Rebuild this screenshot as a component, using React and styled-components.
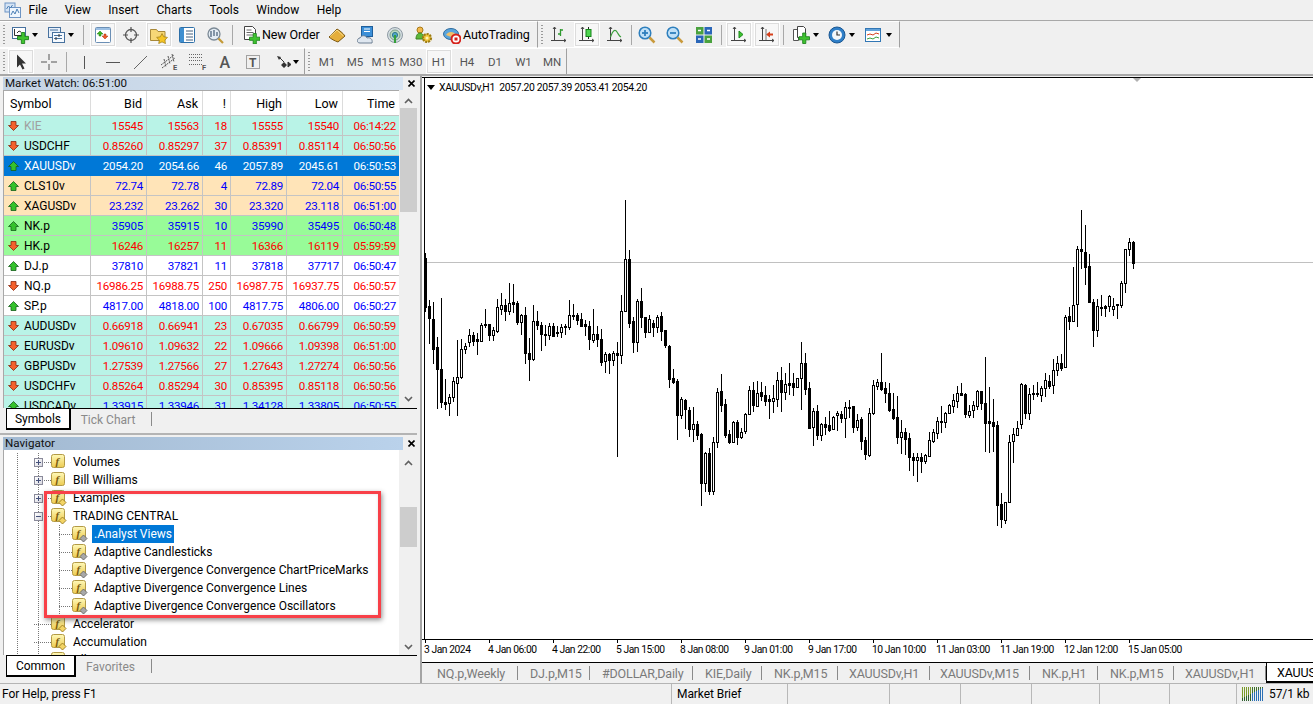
import React from "react";
import styled, { createGlobalStyle } from "styled-components";

const Global = createGlobalStyle`
  html, body { margin: 0; padding: 0; background: #f0f0f0; overflow: hidden; }
  * { box-sizing: border-box; }
  body { font-family: Roboto, "Liberation Sans", sans-serif; font-size: 12px; color: #000; }
`;

const Page = styled.div`
  width: 1313px; height: 704px; display: flex; flex-direction: column; overflow: hidden; background: #f0f0f0;
`;
const MenuBar = styled.div`
  height: 21px; flex: none; display: flex; align-items: center; gap: 17.5px; padding-left: 4px;
  border-bottom: 1px solid #a8a8a8; font-size: 12px;
`;
const Logo = styled.span`display: flex; width: 18px; margin-right: -11px; align-items: center;`;
const ToolRow = styled.div`
  height: ${p => p.$h}px; flex: none; display: flex; align-items: stretch;
  border-bottom: ${p => (p.$rule ? "2px solid #a8a8a8" : "0")};
`;
const ToolGroup = styled.div`
  display: flex; align-items: center; height: 100%; border-right: 1px solid #a0a0a0;
  border-top: 1px solid #fff; border-bottom: ${p => (p.$flat ? "0" : "1px solid #fff")};
`;
const Grip = styled.span`
  flex: none; align-self: center; width: ${p => p.$w}px; height: 19px;
  background: repeating-linear-gradient(#9a9a9a 0 1px, transparent 1px 3px) 3px 0 / 2px 100% no-repeat;
`;
const Sep = styled.span`
  flex: none; width: ${p => p.$w}px; height: 20px;
  background: linear-gradient(#a8a8a8, #a8a8a8) center / 1px 100% no-repeat;
`;
const Btn = styled.span`
  flex: none; display: flex; align-items: center; justify-content: ${p => (p.$start ? "flex-start" : "center")};
  height: 25px; width: ${p => (p.$on ? p.$w - 2 : p.$w)}px;
  padding-left: ${p => p.$pad || 0}px;
  margin: ${p => (p.$on ? "0 1px" : "0")};
  border: ${p => (p.$on ? "1px solid #fff" : "none")};
  background: ${p => (p.$on ? "#f7f7f7" : "transparent")};
  box-shadow: ${p => (p.$on ? "0 0 0 1px #dcdcdc inset" : "none")};
  font-size: ${p => (p.$tf ? "11.5px" : "12.5px")};
  color: ${p => (p.$tf ? "#555" : "#000")};
  white-space: nowrap;
`;
const Caret = styled.span`
  flex: none; width: 0; height: 0; margin-left: ${p => p.$m ?? 3}px;
  border: 3.5px solid transparent; border-top: 4px solid #000; border-bottom: 0;
`;
const BtnLabel = styled.span`margin-left: 2px; letter-spacing: -0.12px;`;

const Main = styled.div`flex: 1; min-height: 0; display: flex;`;
const LeftCol = styled.div`width: 417px; flex: none; display: flex; flex-direction: column;`;
const Panel = styled.div`
  height: ${p => p.$h}px; flex: none; display: flex; flex-direction: column; padding-top: 1px; position: relative;
`;
const Divider = styled.div`height: 3px; flex: none; border-top: 2px solid #b4b4b4;`;
const TitleRow = styled.div`height: 13px; flex: none; display: flex; align-items: center; padding-left: 3px;`;
const Title = styled.div`
  width: 400px; height: 13px; line-height: 13px; padding-left: 2px; font-size: 11.6px; color: #111;
  background: linear-gradient(90deg, ${p => p.$from}, ${p => p.$to});
`;
const Close = styled.span`flex: none; width: 14px; display: flex; justify-content: center; padding-left: 2px;`;

const Body = styled.div`
  height: ${p => p.$h}px; flex: none; display: flex; padding-left: 3px; overflow: hidden;
`;
const Grid = styled.div`
  width: 396px; flex: none; border-left: 1px solid #a8a8a8; border-top: 1px solid #a8a8a8; background: #fff; overflow: hidden;
`;
const Cols = "87px 56px 56px 28px 56px 56px 56px";
const Head = styled.div`
  display: grid; grid-template-columns: ${Cols}; height: 25px; border-bottom: 1px solid #c4c4c4; background: #fff;
`;
const HeadCell = styled.div`
  display: flex; align-items: center; justify-content: ${p => (p.$left ? "flex-start" : "flex-end")};
  padding: ${p => (p.$left ? "1px 0 0 6px" : "1px 4px 0 0")}; font-size: 12.5px; border-right: 1px solid #dcdcdc;
  &:last-child { border-right: 0; }
`;
const Row = styled.div`
  display: grid; grid-template-columns: ${Cols}; height: 20px; background: ${p => p.$bg};
  color: ${p => p.$fg}; border-bottom: 1px solid ${p => (p.$sel ? p.$bg : "#c4c4c4")};
`;
const Cell = styled.div`
  display: flex; align-items: center; justify-content: flex-end; padding-right: 3px; white-space: nowrap;
  font-size: 11.6px; letter-spacing: -0.28px; border-right: 1px solid ${p => (p.$sel ? "transparent" : "#c4c4c4")};
  &:last-child { border-right: 0; }
`;
const SymCell = styled.div`
  display: flex; align-items: center; padding-left: 4px; gap: 5px; font-size: 12px; letter-spacing: 0;
  color: ${p => p.$c}; border-right: 1px solid ${p => (p.$sel ? "transparent" : "#c4c4c4")};
`;
const Scroll = styled.div`
  flex: none; width: 18px; background: #f0f0f0; display: flex; flex-direction: column; align-items: center;
  padding-top: ${p => p.$top}px;
`;
const Chev = styled.span`flex: none; height: ${p => p.$h}px; display: flex; align-items: center; justify-content: center;`;
const Thumb = styled.div`flex: none; width: 17px; margin-left: 1px; height: ${p => p.$h}px; margin-top: ${p => p.$m}px; background: #cdcdcd;`;
const Spacer = styled.div`flex: 1;`;

const TabStrip = styled.div`
  height: ${p => p.$h}px; flex: none; margin-left: 6px; display: flex; align-items: flex-start;
  border-top: 1px solid #000;
`;
const SideTab = styled.div`
  height: 21px; width: ${p => p.$w}px; flex: none; display: flex; align-items: center; justify-content: center;
  font-size: 12px; color: ${p => (p.$on ? "#000" : "#8a8a8a")};
  background: ${p => (p.$on ? "#fff" : "transparent")};
  border: ${p => (p.$on ? "1px solid #000" : "none")}; border-top: 0;
  border-right-width: ${p => (p.$on ? "2px" : "0")};
  border-bottom-width: ${p => (p.$on ? "2px" : "0")};
`;
const SideSep = styled.span`flex: none; width: 1px; height: 14px; margin: 3px 0 0 6px; background: #8a8a8a;`;

const Tree = styled.div`
  width: 396px; flex: none; border-left: 1px solid #a8a8a8; background: #fff; overflow: hidden; position: relative;
  padding-top: 3px;
`;
const dots = (x) => `repeating-linear-gradient(#777 0 1px, transparent 1px 2px) ${x}px 0 / 1px 100% no-repeat`;
const TreeRow = styled.div`
  height: 18px; display: flex; align-items: center; padding-left: ${p => (p.$child ? 55 : 30)}px; font-size: 12px;
  background: ${p => p.$guides.map(dots).join(",")};
`;
const Expander = styled.span`
  flex: none; width: 9px; height: 9px; border: 1px solid #8a8a9a; background: linear-gradient(135deg, #fff, #d8d8e0);
  display: flex; align-items: center; justify-content: center;
`;
const Stub = styled.span`
  flex: none; width: ${p => p.$w}px; margin-left: ${p => p.$m || 0}px; height: 1px;
  background: repeating-linear-gradient(90deg, #777 0 1px, transparent 1px 2px);
`;
const RowIcon = styled.span`flex: none; display: flex; width: 16px; height: 16px;`;
const NodeText = styled.span`
  margin-left: ${p => p.$m}px; padding: 0 2px; height: 18px; line-height: 18px; white-space: nowrap;
  background: ${p => (p.$sel ? "#0078d7" : "transparent")}; color: ${p => (p.$sel ? "#fff" : "#000")};
`;
const Callout = styled.div`
  position: absolute; left: 40px; top: 41px; width: 337px; height: 127px; border: 3px solid #f84048;
  box-shadow: 1px 2px 5px rgba(0,0,0,.45), inset 0 0 3px rgba(0,0,0,.12); pointer-events: none;
`;

const ChartCol = styled.div`
  flex: 1; min-width: 0; margin-left: 3px; display: flex; flex-direction: column; border-left: 2px solid #a4a4a4;
`;
const TopRule = styled.div`height: 1px; flex: none; background: #f0f0f0;`;
const Plot = styled.div`
  height: 562px; flex: none; background: #fff; position: relative; border-top: 1px solid #000; overflow: hidden; padding-left: 2px;
  svg { display: block; }
`;
const Legend = styled.div`
  position: absolute; left: 5px; top: 2px; display: flex; align-items: center; gap: 3px; font-size: 10.4px; letter-spacing: -0.36px; height: 14px; white-space: pre;
`;
const LegendCaret = styled.span`
  border: 4px solid transparent; border-top: 5px solid #000; border-bottom: 0; width: 0; height: 0; margin-right: 1px;
`;
const Marker = styled.span`
  position: absolute; left: 711px; top: 0; width: 0; height: 0;
  border: 4px solid transparent; border-top: 4px solid #b0b0b0; border-bottom: 0;
`;
const Axis = styled.div`
  height: 23px; flex: none; background: #fff; display: flex; padding-left: 2px; border-top: 1px solid #000;
`;
const Tick = styled.div`
  flex: none; width: 64px; font-size: 10.3px; letter-spacing: -0.45px; padding-top: 3px; white-space: nowrap; line-height: 13px;
  background: linear-gradient(#000, #000) 1px 0 / 1px 3px no-repeat;
`;
const ChartTabs = styled.div`
  height: 21px; flex: none; display: flex; border-top: 1px solid #000; background: #f0f0f0; overflow: hidden; padding-left: 1px;
`;
const ChartTab = styled.div`
  flex: none; width: ${p => p.$w}px; padding-left: ${p => p.$pad}px; display: flex; align-items: center; white-space: nowrap;
  font-size: 12.5px; letter-spacing: -0.15px; color: ${p => (p.$on ? "#000" : "#7a7a7a")};
  background: ${p => (p.$on ? "#fff" : "linear-gradient(#8a8a8a,#8a8a8a) right center / 1px 14px no-repeat")};
  border-left: ${p => (p.$on ? "1px solid #000" : "0")}; border-bottom: ${p => (p.$on ? "2px solid #000" : "0")};
`;
const Status = styled.div`
  height: 21px; flex: none; display: flex; align-items: center; border-top: 1px solid #b4b4b4; font-size: 12px;
`;
const StatusCell = styled.div`
  flex: none; width: ${p => p.$w}px; height: 100%; padding-left: ${p => p.$pad ?? 5}px; display: flex; align-items: center; gap: 5px;
  border-right: ${p => (p.$last ? "0" : "1px solid #b8b8b8")}; white-space: nowrap; letter-spacing: -0.08px;
`;

/* ---------- icons ---------- */
const S = ({ children, w = 18, h = 18, vb }) => (
  <svg width={w} height={h} viewBox={vb || `0 0 ${w} ${h}`} style={{ display: "block", flex: "none" }}>{children}</svg>
);
const GreenPlus = ({ x = 0, y = 0, s = 1 }) => (
  <path transform={`translate(${x} ${y}) scale(${s})`} d="M3.5 0h3v3.5H10v3H6.5V10h-3V6.5H0v-3h3.5z" fill="#3fc32f" stroke="#1a7f1a" strokeWidth=".8" />
);
const Win = ({ x, y, w, h, c = "#4a7fb5", f = "#fff" }) => <rect x={x + .5} y={y + .5} width={w} height={h} fill={f} stroke={c} />;
const AppLogo = () => (
  <S><rect x="1" y="2" width="10" height="9" fill="#d6e4f5" stroke="#6d94c4" /><rect x="5.5" y="6.5" width="11" height="10" fill="#eef5fd" stroke="#6d94c4" />
    <path d="M7 14l2-4 2 3 2-5 2 4" fill="none" stroke="#4a7fb5" /><path d="M2.5 8l2-3 2 2 2-3" fill="none" stroke="#4a7fb5" /></S>
);
const INewChart = () => (
  <S><Win x={1} y={1} w={13} h={11} c="#47719e" /><path d="M3.5 3v6.5h8" fill="none" stroke="#333" /><path d="M6 7l2-2 2 1" stroke="#333" fill="none" /><GreenPlus x={6.5} y={6.5} s={1.1} /></S>
);
const IProfile = () => (
  <S><Win x={1} y={1} w={12} h={10} c="#47719e" f="#e8f0fa" /><Win x={5} y={6} w={12} h={10} c="#47719e" f="#f6faff" /><path d="M7 9.5h8M7 12.5h8M3 4h8" stroke="#47719e" /><path d="M12 8v3M9 11v3" stroke="#333" /></S>
);
const IMarket = () => (
  <S><rect x="1.5" y="1.5" width="15" height="15" rx="1" fill="#fff" stroke="#6b8fb5" /><path d="M2 2h14v2H2z" fill="#9cc0e4" /><path d="M6 5l3 3H7v2H5V8H3z" fill="#3cb81f" stroke="#1a7a12" strokeWidth=".5" /><path d="M11 13l-3-3h2V8h2v2h2z" fill="#f05a28" stroke="#a8340d" strokeWidth=".5" /></S>
);
const ICross = () => (
  <S><circle cx="9" cy="9" r="5.5" fill="none" stroke="#555" strokeWidth="1.3" /><path d="M9 1v5M9 12v5M1 9h5M12 9h5" stroke="#555" strokeWidth="1.2" /></S>
);
const INav = () => (
  <S><path d="M.5 3.5h6l1.5 2h7v9H.5z" fill="#f6d776" stroke="#a8893a" /><path d="M12 7.5l1.8 3.3 3.7.6-2.6 2.6.6 3.6-3.5-1.7-3.3 1.7.6-3.6-2.7-2.6 3.7-.6z" fill="#f5c525" stroke="#9b7a16" strokeWidth=".7" /></S>
);
const ITerm = () => (
  <S><rect x="1.5" y="1.5" width="15" height="15" rx="1" fill="#fff" stroke="#2d6fa8" /><rect x="2" y="2" width="4" height="14" fill="#3f8fd0" /><path d="M8 5h7M8 8h7M8 11h7M8 14h7" stroke="#44607d" /></S>
);
const ITester = () => (
  <S><circle cx="8" cy="8" r="6" fill="#e4edf5" stroke="#7c8a96" strokeWidth="1.3" /><path d="M5 11V5M8 10V4M11 10V6" stroke="#5b7188" strokeWidth="1.4" /><path d="M12.5 12.5l4.5 4.5" stroke="#c49a38" strokeWidth="2.2" /></S>
);
const IOrder = () => (
  <S><path d="M2.5.5h8l3 3v10h-11z" fill="#fff" stroke="#444" /><path d="M4.5 4h5M4.5 6.5h7M4.5 9h7" stroke="#666" /><GreenPlus x={7.5} y={7.5} s={1.05} /></S>
);
const IBook = () => (
  <S><path d="M1 11L9 3c2 1 6 4 8 7l-7 6c-3-1-7-3-9-5z" fill="#e5ae3a" stroke="#7e5a14" /><path d="M2 10.5l7-6.5 6.5 6" fill="none" stroke="#f7dd8c" /></S>
);
const ICloud = () => (
  <S><rect x="4.5" y=".5" width="11" height="10" fill="#3b8fd8" stroke="#1f5e9a" /><path d="M7 3h6M7 5.5h6" stroke="#fff" /><path d="M3 17c-4 0-3-5 0-5 1-3 6-3 7 0 3-1 6 1 5 5z" fill="#dfe7f0" stroke="#6d7f93" /></S>
);
const ISignal = () => (
  <S><circle cx="9" cy="9" r="7.5" fill="#d5dde2" stroke="#8d9aa3" /><circle cx="9" cy="9" r="5" fill="#b9d9c2" stroke="#7fa18a" /><circle cx="9" cy="9" r="2.6" fill="#4fa6c4" stroke="#2f7590" /><path d="M9 9v8" stroke="#35a03a" strokeWidth="2" /></S>
);
const IUsers = () => (
  <S><circle cx="5" cy="4" r="3" fill="#f2b84b" stroke="#a87a16" /><path d="M1 13c0-4 2-6 4-6s4 2 4 6z" fill="#5db83a" stroke="#3a8020" /><circle cx="12" cy="12" r="4" fill="#f0c53a" stroke="#9d7c12" strokeWidth="2.2" strokeDasharray="2 1" /><circle cx="12" cy="12" r="1.5" fill="#fff3b5" /></S>
);
const IAuto = () => (
  <S><ellipse cx="8" cy="8" rx="7.5" ry="5.5" fill="#5aa5dc" stroke="#2f6c9e" /><path d="M3 9c2-4 8-4 10 0l-5 2z" fill="#efc06a" /><circle cx="13" cy="13" r="4.5" fill="#fff" stroke="#d6231c" strokeWidth="2" /><rect x="11.5" y="11.5" width="3" height="3" fill="#d6231c" /></S>
);
const Axes = () => <path d="M4.5 1v14M1 14.5h15M3 3l1.5-2L6 3M14 13l2 1.5-2 1.5" fill="none" stroke="#444" />;
const IBar = () => <S><Axes /><path d="M10.5 3v7M10.5 4h2.5M8 8h2.5" stroke="#2f9a2f" strokeWidth="1.3" fill="none" /></S>;
const ICandle = () => <S><Axes /><path d="M10.5 1v12" stroke="#222" /><rect x="8" y="3.5" width="5" height="7" fill="#4ed44e" stroke="#16841a" /></S>;
const ILine = () => <S><Axes /><path d="M4.5 11C7 4 9 3 11 6s2 4 4 5" fill="none" stroke="#3ca03c" strokeWidth="1.2" /></S>;
const IZoom = ({ plus }) => (
  <S><circle cx="7" cy="7" r="5.8" fill="#bfe0f7" stroke="#2e7fbd" strokeWidth="1.5" /><path d="M4 7h6" stroke="#2e7fbd" strokeWidth="1.8" />{plus && <path d="M7 4v6" stroke="#2e7fbd" strokeWidth="1.8" />}<path d="M11.5 11.5l5 5" stroke="#c99a3c" strokeWidth="2.5" /></S>
);
const ITile = () => (
  <S><rect x="1" y="1" width="7.5" height="7.5" fill="#4aa23e" /><rect x="9.5" y="1" width="7.5" height="7.5" fill="#2a66b8" /><rect x="1" y="9.5" width="7.5" height="7.5" fill="#2a66b8" /><rect x="9.5" y="9.5" width="7.5" height="7.5" fill="#4aa23e" /><path d="M3 4.5h3M12 4.5h3M3 13h3M12 13h3" stroke="#fff" strokeWidth="1.5" /></S>
);
const IScroll = () => <S><Axes /><path d="M9 5v7l4-3.5z" fill="#3fc32f" stroke="#1c8a1c" /></S>;
const IShift = () => <S><Axes /><path d="M8 8.5l4-3v2h3v2h-3v2z" fill="#d6401c" /><path d="M8 3v11" stroke="#777" /></S>;
const ITemplate = () => (
  <S><path d="M1.5 3.5h5v11h-5z" fill="#fff" stroke="#555" /><path d="M5.5.5h6l2 2v9h-8z" fill="#fff" stroke="#444" /><GreenPlus x={7} y={7} s={1.05} /></S>
);
const IClock = () => (
  <S><circle cx="9" cy="9" r="8" fill="#2f7fc8" stroke="#1a5792" /><circle cx="9" cy="9" r="5" fill="#f2f7fb" /><path d="M9 5.5V9h3" stroke="#333" fill="none" strokeWidth="1.2" /></S>
);
const IInd = () => (
  <S><rect x="1.5" y="2.5" width="15" height="13" fill="#fff" stroke="#3277b5" /><path d="M2 3h14v2H2z" fill="#63a2da" /><path d="M3 9l3-1 3 1 3-2 3 1" stroke="#d6401c" fill="none" /><path d="M3 13l3-1 3 1 3-2 3 1" stroke="#3ca03c" fill="none" /></S>
);
const ICursor = () => <S><path d="M5 1.5v13l3-3 2.5 5 2-1-2.5-5H14z" fill="#333" /></S>;
const IThin = () => <S><path d="M9 1v6M9 11v6M1 9h6M11 9h6" stroke="#555" /></S>;
const IV = () => <S><path d="M9.5 3v13" stroke="#555" /></S>;
const IH = () => <S><path d="M2 9.5h14" stroke="#555" /></S>;
const ITrend = () => <S><path d="M2 16L15 3" stroke="#666" /></S>;
const Mini = ({ children, x }) => <text x={x} y="17.5" fontSize="7.5" fontWeight="700" fontFamily="Roboto, sans-serif" fill="#555">{children}</text>;
const IChan = () => (
  <S w={20} h={19}><path d="M2 13L15 3M3 16L16 6M5 7l2 8M9 4l2 8M13 2l2 8" stroke="#555" strokeDasharray="2 .8" /><Mini x={14}>E</Mini></S>
);
const IFib = () => (
  <S w={20} h={19}><path d="M2 2.5h13M2 5.5h13M2 8.5h13M2 12.5h13" stroke="#666" strokeDasharray="1 1" /><Mini x={15}>F</Mini></S>
);
const IA = () => <S><text x="3.5" y="15" fontSize="16" fontWeight="500" fontFamily="Roboto, sans-serif" fill="#555">A</text></S>;
const IT = () => <S><rect x="2.5" y="2.5" width="13" height="13" fill="none" stroke="#555" strokeDasharray="1 1" /><text x="5" y="13.5" fontSize="12" fontWeight="700" fontFamily="Roboto, sans-serif" fill="#555">T</text></S>;
const IArrows = () => <S><path d="M3 3l4 1-2 3zM10 9l3 3-3 3-3-3z" fill="#333" /><path d="M14 9l3 2.5-3 2.5zM6 5l4 4" stroke="#333" fill="#333" /></S>;
const IClose = () => <svg width="7" height="7" viewBox="0 0 7 7" style={{ display: "block" }}><path d="M.5.5l6 6M6.5.5l-6 6" stroke="#000" strokeWidth="1.6" /></svg>;
const ChevUp = () => <svg width="9" height="6" viewBox="0 0 9 6" style={{ display: "block" }}><path d="M1 5l3.5-3.5L8 5" fill="none" stroke="#606060" strokeWidth="1.6" /></svg>;
const ChevDown = () => <svg width="9" height="6" viewBox="0 0 9 6" style={{ display: "block" }}><path d="M1 1l3.5 3.5L8 1" fill="none" stroke="#606060" strokeWidth="1.6" /></svg>;
const ArrUp = () => <svg width="11" height="10" viewBox="0 0 11 10" style={{ display: "block", flex: "none" }}><path d="M5.5.5l5 5H8v4H3v-4H.5z" fill="#35c22c" stroke="#14601a" strokeWidth=".8" /></svg>;
const ArrDown = () => <svg width="11" height="10" viewBox="0 0 11 10" style={{ display: "block", flex: "none" }}><path d="M5.5 9.5l-5-5H3v-4h5v4h2.5z" fill="#f4602c" stroke="#8c2a10" strokeWidth=".8" /></svg>;
const Fx = ({ tone }) => (
  <svg width="16" height="16" viewBox="0 0 16 16" style={{ display: "block" }}>
    <defs><linearGradient id="fxg" x1="0" y1="0" x2="0" y2="1"><stop offset="0" stopColor="#fff9b8" /><stop offset="1" stopColor="#eccb52" /></linearGradient></defs>
    <rect x=".5" y=".5" width="13" height="13" rx="2" fill="url(#fxg)" stroke="#b39a46" />
    <text x="4.5" y="11" fontSize="11" fontStyle="italic" fontWeight="700" fontFamily="'Liberation Serif', serif" fill="#7a5a10">f</text>
    {tone && <path d="M11.5 9l3.5 3.5-3.5 3.5L8 12.5z" fill={tone === "gray" ? "#a8a8a8" : "#f3d465"} stroke={tone === "gray" ? "#666" : "#9a7a20"} strokeWidth=".9" />}
  </svg>
);

/* ---------- data ---------- */
const UP = "#0000ff", DOWN = "#ff0000";
const MINT = "#b9f3e7", PEACH = "#ffe4b8", GREEN = "#98fb98", WHITE = "#ffffff", SEL = "#0078d7";
const quotes = [
  ["KIE", 0, MINT, DOWN, "15545", "15563", "18", "15555", "15540", "06:14:22", "#a0a0a0"],
  ["USDCHF", 0, MINT, DOWN, "0.85260", "0.85297", "37", "0.85391", "0.85114", "06:50:56"],
  ["XAUUSDv", 1, SEL, "#ffffff", "2054.20", "2054.66", "46", "2057.89", "2045.61", "06:50:53", "#ffffff"],
  ["CLS10v", 1, PEACH, UP, "72.74", "72.78", "4", "72.89", "72.04", "06:50:55"],
  ["XAGUSDv", 1, PEACH, UP, "23.232", "23.262", "30", "23.320", "23.118", "06:51:00"],
  ["NK.p", 1, GREEN, UP, "35905", "35915", "10", "35990", "35495", "06:50:48"],
  ["HK.p", 0, GREEN, DOWN, "16246", "16257", "11", "16366", "16119", "05:59:59"],
  ["DJ.p", 1, WHITE, UP, "37810", "37821", "11", "37818", "37717", "06:50:47"],
  ["NQ.p", 0, WHITE, DOWN, "16986.25", "16988.75", "250", "16987.75", "16937.75", "06:50:57"],
  ["SP.p", 1, WHITE, UP, "4817.00", "4818.00", "100", "4817.75", "4806.00", "06:50:27"],
  ["AUDUSDv", 0, MINT, DOWN, "0.66918", "0.66941", "23", "0.67035", "0.66799", "06:50:59"],
  ["EURUSDv", 0, MINT, DOWN, "1.09610", "1.09632", "22", "1.09666", "1.09398", "06:51:00"],
  ["GBPUSDv", 0, MINT, DOWN, "1.27539", "1.27566", "27", "1.27643", "1.27274", "06:50:56"],
  ["USDCHFv", 0, MINT, DOWN, "0.85264", "0.85294", "30", "0.85395", "0.85118", "06:50:56"],
  ["USDCADv", 1, MINT, UP, "1.33915", "1.33946", "31", "1.34128", "1.33805", "06:50:55"],
];

// wick top, body top, body bottom, wick bottom, filled
const candles = [
[253,258,307,311,1],[300,306,318,343,1],[302,319,349,363,1],[337,347,369,408,1],[298,369,402,407,1],[379,402,404,409,1],[394,397,403,415,0],[377,381,397,401,0],[340,377,383,415,0],[339,349,377,378,0],
[343,346,349,353,0],[329,335,342,346,0],[332,335,341,345,1],[333,339,341,354,1],[323,325,341,341,0],[309,324,325,327,1],[324,324,335,340,1],[327,330,335,340,0],[299,307,331,332,0],[293,305,309,314,0],
[299,305,311,320,1],[283,303,311,314,0],[284,302,304,312,1],[301,303,322,324,1],[314,315,322,334,0],[307,315,353,363,1],[338,353,359,380,1],[305,321,359,360,0],[311,321,325,329,1],[322,325,334,350,1],
[325,334,335,345,1],[323,326,335,339,0],[323,326,336,336,1],[326,332,333,336,1],[324,327,332,337,0],[324,326,327,334,1],[300,315,327,329,0],[304,315,316,319,1],[313,315,320,324,1],[313,319,326,326,1],
[320,324,326,335,1],[321,326,339,349,1],[309,334,340,342,0],[326,334,339,346,1],[329,339,362,365,1],[352,354,361,372,0],[353,354,360,373,1],[351,353,360,365,0],[342,353,355,456,1],[295,311,355,363,0],
[200,259,311,311,0],[250,259,323,327,1],[317,321,342,352,1],[299,301,342,351,0],[288,301,317,327,1],[317,317,332,337,1],[315,319,332,332,0],[320,323,327,336,1],[315,317,327,332,0],[312,316,331,340,1],
[330,330,345,347,1],[345,346,379,387,1],[369,378,382,383,1],[379,381,415,439,1],[397,399,415,418,0],[399,400,409,428,1],[407,410,429,436,1],[407,424,429,441,0],[421,424,435,439,1],[433,434,483,505,1],
[452,453,483,491,0],[448,453,491,494,1],[437,442,491,494,0],[388,392,442,447,0],[374,391,405,411,1],[399,404,435,437,1],[430,434,442,443,1],[421,422,442,442,0],[420,422,437,444,1],[428,432,437,438,0],
[413,414,431,433,0],[386,390,414,414,0],[382,390,405,411,1],[381,393,406,406,0],[382,392,396,400,1],[386,395,401,405,1],[395,399,401,418,1],[385,398,401,412,0],[372,380,399,406,0],[367,380,392,411,1],
[373,384,392,399,0],[363,383,385,394,1],[373,383,387,395,1],[378,378,387,387,0],[342,363,378,409,0],[353,363,389,394,1],[382,388,428,428,1],[408,411,427,445,0],[405,411,435,439,1],[423,424,435,440,0],
[417,424,427,434,1],[411,425,430,431,1],[416,417,429,429,0],[411,413,415,430,0],[411,414,418,422,1],[402,407,418,437,0],[400,407,408,417,1],[406,406,427,432,1],[414,420,427,430,0],[417,419,441,449,1],
[437,440,454,459,1],[408,413,455,456,0],[380,385,413,414,0],[379,382,386,389,0],[353,382,389,390,1],[382,388,393,402,1],[383,393,410,411,1],[393,409,418,419,1],[396,417,437,443,1],[420,432,437,453,0],
[428,432,439,454,1],[433,438,457,470,1],[453,457,460,475,1],[453,457,460,481,0],[453,457,461,472,1],[454,455,461,463,0],[432,440,456,456,0],[429,432,441,442,0],[417,421,433,438,0],[406,421,422,432,1],
[412,413,422,427,0],[404,405,413,413,0],[394,400,406,412,0],[386,393,401,407,0],[383,393,395,395,1],[393,394,414,417,1],[405,411,415,417,0],[401,405,410,417,0],[390,391,406,409,0],[391,391,403,409,1],
[357,403,423,451,1],[387,421,423,452,1],[399,422,426,451,1],[421,425,505,525,1],[493,504,519,527,1],[502,502,520,523,0],[435,442,502,502,0],[428,434,441,462,0],[421,428,435,435,0],[383,384,424,428,0],
[384,385,413,418,1],[388,394,413,419,0],[385,393,394,399,1],[382,393,394,396,1],[386,388,395,401,0],[373,380,388,396,0],[375,381,386,388,1],[359,370,385,393,0],[356,363,370,375,0],[354,363,368,370,1],
[315,317,367,367,0],[307,316,321,329,1],[267,305,321,321,0],[246,249,304,326,0],[210,249,251,268,1],[225,252,267,284,1],[254,266,302,302,1],[299,302,330,346,1],[299,306,330,336,0],[295,307,308,315,1],
[305,306,308,316,1],[295,296,306,311,0],[298,306,309,315,0],[304,304,305,318,1],[281,283,305,307,0],[249,249,283,292,0],[238,242,249,255,0],[241,242,263,268,1],
];

const ticks = ["3 Jan 2024","4 Jan 06:00","4 Jan 22:00","5 Jan 15:00","8 Jan 08:00","9 Jan 01:00","9 Jan 17:00","10 Jan 10:00","11 Jan 03:00","11 Jan 19:00","12 Jan 12:00","15 Jan 05:00"];
const chartTabs = [["NQ.p,Weekly",95,14],["DJ.p,M15",72,12],["#DOLLAR,Daily",103,12],["KIE,Daily",69,12],["NK.p,M15",76,12],["XAUUSDv,H1",92,11],["XAUUSDv,M15",100,10],["NK.p,H1",68,12],["NK.p,M15",76,12],["XAUUSDv,H1",92,11]];

const Chart = () => (
  <svg width="889" height="561" viewBox="424 78 889 561" shapeRendering="crispEdges">
    <rect x="424" y="78" width="1" height="561" fill="#000" />
    <rect x="425" y="262" width="888" height="1" fill="#c0c0c0" />
    {candles.map(([wt, bt, bb, wb, filled], i) => {
      const x = 425 + i * 4;
      return (
        <g key={i}>
          <rect x={x} y={wt} width="1" height={wb - wt + 1} fill="#000" />
          <rect x={x - 1} y={bt} width="3" height={bb - bt + 1} fill="#000" />
          {!filled && bb - bt > 1 && <rect x={x} y={bt + 1} width="1" height={bb - bt - 1} fill="#fff" />}
        </g>
      );
    })}
  </svg>
);

const Quote = ({ q }) => {
  const [sym, up, bg, fg, bid, ask, sp, hi, lo, time, symColor] = q;
  const sel = bg === SEL;
  return (
    <Row $bg={bg} $fg={fg} $sel={sel}>
      <SymCell $c={symColor || "#000"} $sel={sel}>{up ? <ArrUp /> : <ArrDown />}{sym}</SymCell>
      {[bid, ask, sp, hi, lo, time].map((v, i) => <Cell key={i} $sel={sel}>{v}</Cell>)}
    </Row>
  );
};

const Node = ({ label, tone, open }) => (
  <TreeRow $guides={[13, 34]}>
    <Expander><svg width="7" height="7" viewBox="0 0 7 7" style={{ display: "block" }}><path d={open ? "M1 3.5h5" : "M1 3.5h5M3.5 1v5"} stroke="#44507a" /></svg></Expander>
    <Stub $w={7} $m={1} />
    <RowIcon><Fx tone={tone} /></RowIcon>
    <NodeText $m={4}>{label}</NodeText>
  </TreeRow>
);
const Leaf = ({ label, tone }) => (
  <TreeRow $guides={[13, 34]}>
    <Stub $w={17} />
    <RowIcon><Fx tone={tone} /></RowIcon>
    <NodeText $m={4}>{label}</NodeText>
  </TreeRow>
);
const Child = ({ label, sel }) => (
  <TreeRow $child $guides={[13, 34, 55]}>
    <Stub $w={13} />
    <RowIcon><Fx tone="gray" /></RowIcon>
    <NodeText $m={4} $sel={sel}>{label}</NodeText>
  </TreeRow>
);

export default function App() {
  return (
    <Page>
      <Global />
      <MenuBar>
        <Logo><AppLogo /></Logo>
        <span>File</span><span>View</span><span>Insert</span><span>Charts</span><span>Tools</span><span>Window</span><span>Help</span>
      </MenuBar>

      <ToolRow $h={27}>
        <ToolGroup>
          <Grip $w={9} />
          <Btn $w={33} $start $pad={2}><INewChart /><Caret /></Btn>
          <Btn $w={36} $start $pad={5}><IProfile /><Caret /></Btn>
          <Sep $w={11} />
          <Btn $w={28} $on><IMarket /></Btn>
          <Btn $w={28}><ICross /></Btn>
          <Btn $w={28} $on><INav /></Btn>
          <Btn $w={28}><ITerm /></Btn>
          <Btn $w={28}><ITester /></Btn>
          <Sep $w={6} />
          <Btn $w={88} $start $pad={7}><IOrder /><BtnLabel>New Order</BtnLabel></Btn>
          <Btn $w={28}><IBook /></Btn>
          <Btn $w={29}><ICloud /></Btn>
          <Btn $w={29}><ISignal /></Btn>
          <Btn $w={30}><IUsers /></Btn>
          <Btn $w={98} $start $pad={4}><IAuto /><BtnLabel>AutoTrading</BtnLabel></Btn>
        </ToolGroup>
        <ToolGroup>
          <Grip $w={7} />
          <Btn $w={28}><IBar /></Btn>
          <Btn $w={28} $on><ICandle /></Btn>
          <Btn $w={28}><ILine /></Btn>
          <Sep $w={4} />
          <Btn $w={28}><IZoom plus /></Btn>
          <Btn $w={28}><IZoom /></Btn>
          <Btn $w={29}><ITile /></Btn>
          <Sep $w={7} />
          <Btn $w={28} $on><IScroll /></Btn>
          <Btn $w={28} $on><IShift /></Btn>
          <Sep $w={4} />
          <Btn $w={38} $start $pad={7}><ITemplate /><Caret /></Btn>
          <Btn $w={38} $start $pad={5}><IClock /><Caret /></Btn>
          <Btn $w={38} $start $pad={3}><IInd /><Caret $m={4} /></Btn>
        </ToolGroup>
      </ToolRow>

      <ToolRow $h={28} $rule>
        <ToolGroup $flat>
          <Grip $w={7} />
          <Btn $w={28} $on><ICursor /></Btn>
          <Btn $w={27}><IThin /></Btn>
          <Sep $w={8} />
          <Btn $w={28}><IV /></Btn>
          <Btn $w={29}><IH /></Btn>
          <Btn $w={28}><ITrend /></Btn>
          <Btn $w={28}><IChan /></Btn>
          <Btn $w={28}><IFib /></Btn>
          <Btn $w={28}><IA /></Btn>
          <Btn $w={28}><IT /></Btn>
          <Btn $w={37} $start $pad={7}><IArrows /><Caret $m={1} /></Btn>
        </ToolGroup>
        <ToolGroup $flat>
          <Grip $w={8} />
          <Btn $w={28} $tf>M1</Btn>
          <Btn $w={28} $tf>M5</Btn>
          <Btn $w={28} $tf>M15</Btn>
          <Btn $w={28} $tf>M30</Btn>
          <Btn $w={28} $tf $on>H1</Btn>
          <Btn $w={28} $tf>H4</Btn>
          <Btn $w={28} $tf>D1</Btn>
          <Btn $w={29} $tf>W1</Btn>
          <Btn $w={28} $tf>MN</Btn>
        </ToolGroup>
      </ToolRow>

      <Main>
        <LeftCol>
          <Panel $h={357}>
            <TitleRow>
              <Title $from="#c4d3e4" $to="#d8e5f3">Market Watch: 06:51:00</Title>
              <Close><IClose /></Close>
            </TitleRow>
            <Body $h={318}>
              <Grid>
                <Head>
                  <HeadCell $left>Symbol</HeadCell><HeadCell>Bid</HeadCell><HeadCell>Ask</HeadCell><HeadCell>!</HeadCell><HeadCell>High</HeadCell><HeadCell>Low</HeadCell><HeadCell>Time</HeadCell>
                </Head>
                {quotes.map((q) => <Quote key={q[0]} q={q} />)}
              </Grid>
              <Scroll $top={8}>
                <Chev $h={6}><ChevUp /></Chev>
                <Thumb $h={104} $m={4} />
                <Spacer />
                <Chev $h={18}><ChevDown /></Chev>
              </Scroll>
            </Body>
            <TabStrip $h={23}>
              <SideTab $on $w={65}>Symbols</SideTab>
              <SideTab $w={74}>Tick Chart</SideTab>
              <SideSep />
            </TabStrip>
          </Panel>
          <Divider />
          <Panel $h={244}>
            <TitleRow>
              <Title $from="#a2b9d1" $to="#bad2eb">Navigator</Title>
              <Close><IClose /></Close>
            </TitleRow>
            <Body $h={205}>
              <Tree>
                <Node label="Volumes" />
                <Node label="Bill Williams" />
                <Node label="Examples" tone="gold" />
                <Node label="TRADING CENTRAL" tone="gold" open />
                <Child label=".Analyst Views" sel />
                <Child label="Adaptive Candlesticks" />
                <Child label="Adaptive Divergence Convergence ChartPriceMarks" />
                <Child label="Adaptive Divergence Convergence Lines" />
                <Child label="Adaptive Divergence Convergence Oscillators" />
                <Leaf label="Accelerator" tone="gold" />
                <Leaf label="Accumulation" tone="gold" />
                <Leaf label="Alligator" tone="gold" />
                <Callout />
              </Tree>
              <Scroll $top={10}>
                <Chev $h={6}><ChevUp /></Chev>
                <Thumb $h={40} $m={41} />
                <Spacer />
                <Chev $h={16}><ChevDown /></Chev>
              </Scroll>
            </Body>
            <TabStrip $h={25}>
              <SideTab $on $w={70}>Common</SideTab>
              <SideTab $w={69}>Favorites</SideTab>
              <SideSep />
            </TabStrip>
          </Panel>
        </LeftCol>

        <ChartCol>
          <TopRule />
          <Plot>
            <Chart />
            <Legend><LegendCaret /><span>XAUUSDv,H1  2057.20 2057.39 2053.41 2054.20</span></Legend>
            <Marker />
          </Plot>
          <Axis>{ticks.map((t) => <Tick key={t}>{t}</Tick>)}</Axis>
          <ChartTabs>
            {chartTabs.map(([t, w, pad], i) => <ChartTab key={i} $w={w} $pad={pad}>{t}</ChartTab>)}
            <ChartTab $on $w={100} $pad={10}>XAUUSDv,M15</ChartTab>
          </ChartTabs>
        </ChartCol>
      </Main>

      <Status>
        <StatusCell $w={672} $pad={2}>For Help, press F1</StatusCell>
        <StatusCell $w={116}>Market Brief</StatusCell>
        <StatusCell $w={102} />
        <StatusCell $w={71} />
        <StatusCell $w={71} />
        <StatusCell $w={68} />
        <StatusCell $w={70} />
        <StatusCell $w={67} />
        <StatusCell $w={76} $last>
          <svg width="22" height="14" viewBox="0 0 22 14" style={{ display: "block", flex: "none" }}>
            {[...Array(11)].map((_, i) => (
              <g key={i}><rect x={i * 2} y={0} width="1" height="14" fill={i < 5 ? "#7a9a2a" : "#3f6f2a"} /><rect x={i * 2} y={14 - (i + 3)} width="1" height={i + 3} fill={i < 5 ? "#2f5f2f" : "#2a6fb5"} /></g>
            ))}
          </svg>
          57/1 kb
        </StatusCell>
      </Status>
    </Page>
  );
}
